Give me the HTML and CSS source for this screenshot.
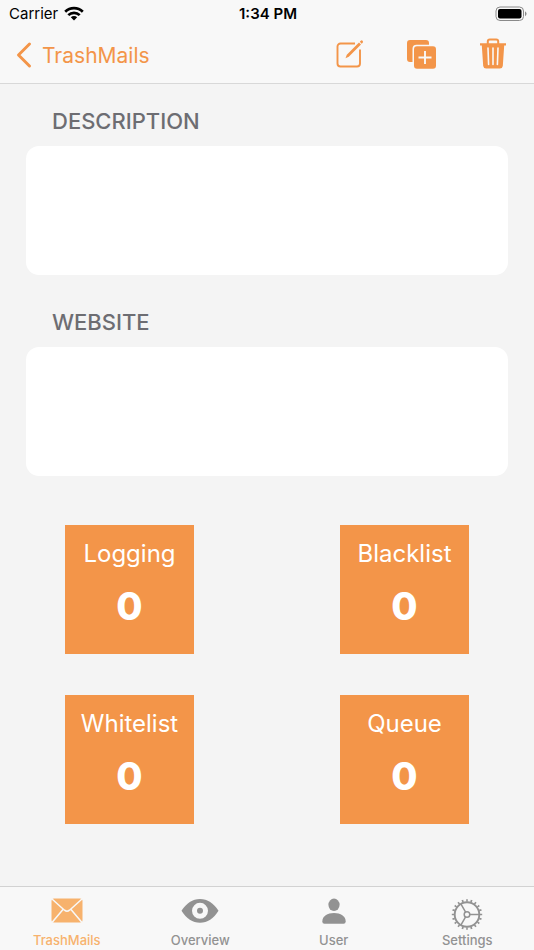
FILE: index.html
```html
<!DOCTYPE html>
<html lang="en">
<head>
  <meta charset="UTF-8" />
  <meta name="viewport" content="width=device-width, initial-scale=1" />
  <title>TrashMails</title>
  <link rel="stylesheet" href="styles.css">
</head>
<body>

  <header class="topbar">
    <div class="status">
      <div class="carrier">
        <span>Carrier</span>
        <svg width="20" height="16" viewBox="0 0 20 16" aria-hidden="true">
          <g fill="none" stroke="#000" stroke-width="2.7">
            <path d="M1.2 5.7 a12.6 12.6 0 0 1 17.6 0" />
            <path d="M4.3 9.1 a8.2 8.2 0 0 1 11.4 0" />
          </g>
          <path d="M10 14.4 L6.8 11.2 a4.6 4.6 0 0 1 6.4 0 z" fill="#000" />
        </svg>
      </div>
      <span class="time">1:34 PM</span>
      <svg class="battery" width="32" height="16" viewBox="0 0 32 16" aria-hidden="true">
        <rect x="1" y="1" width="27.5" height="13.5" rx="4" fill="none" stroke="#8a8a8a" />
        <rect x="3" y="3" width="23.5" height="9.5" rx="2" fill="#000" />
        <path d="M30 5.2 q3.2 2.5 0 5 z" fill="#8a8a8a" />
      </svg>
    </div>
    <nav class="navbar">
      <a class="back" href="#">
        <svg width="16" height="26" viewBox="0 0 16 26" aria-hidden="true">
          <path d="M13.5 2 L2.5 13 L13.5 24" fill="none" stroke="currentColor" stroke-width="3" stroke-linecap="round" stroke-linejoin="round" />
        </svg>
        <span>TrashMails</span>
      </a>
      <div class="actions">
        <button type="button" aria-label="Edit">
          <svg width="32" height="32" viewBox="0 0 32 32">
            <path d="M22 4.5 H7.5 a3 3 0 0 0 -3 3 V24.5 a3 3 0 0 0 3 3 H24 a3 3 0 0 0 3 -3 V10.5" fill="none" stroke="currentColor" stroke-width="1.9" />
            <path d="M12.5 19.2 L13.8 15.7 L26 3.6 L28 5.6 L15.8 17.8 z M26.8 2.7 l1 -1 q0.9 -0.7 1.8 0.1 q0.8 1 0.1 1.9 l-1 1 z" fill="currentColor" />
          </svg>
        </button>
        <button type="button" aria-label="Duplicate">
          <svg width="32" height="32" viewBox="0 0 32 32">
            <path d="M5 1 H21 a3 3 0 0 1 3 3 V5.8 H11.5 a4 4 0 0 0 -4 4 V23 H5 a3 3 0 0 1 -3 -3 V4 a3 3 0 0 1 3 -3 z" fill="currentColor" />
            <rect x="9" y="7.3" width="22" height="22.5" rx="3" fill="currentColor" />
            <path d="M20 12 V25 M13.5 18.5 H26.5" stroke="#f8f8f8" stroke-width="1.9" />
          </svg>
        </button>
        <button type="button" aria-label="Delete">
          <svg width="32" height="32" viewBox="0 0 32 32">
            <path d="M10.8 5 V2.5 a2 2 0 0 1 2 -2 H19.2 a2 2 0 0 1 2 2 V5" fill="none" stroke="currentColor" stroke-width="2" />
            <path d="M3 4.3 H29 V6.5 H27.2 L25.8 27 a3 3 0 0 1 -3 2.5 H9.2 a3 3 0 0 1 -3 -2.5 L4.8 6.5 H3 z" fill="currentColor" />
            <path d="M11 9 L11.6 25.5 M16 9 V25.5 M21 9 L20.4 25.5" stroke="#f8f8f8" stroke-width="1.6" stroke-linecap="round" />
          </svg>
        </button>
      </div>
    </nav>
  </header>

  <main>
    <div class="field">
      <label for="description">DESCRIPTION</label>
      <textarea id="description"></textarea>
    </div>
    <div class="field">
      <label for="website">WEBSITE</label>
      <textarea id="website"></textarea>
    </div>

    <div class="tiles">
      <button type="button" class="tile"><span>Logging</span><strong>0</strong></button>
      <button type="button" class="tile"><span>Blacklist</span><strong>0</strong></button>
      <button type="button" class="tile"><span>Whitelist</span><strong>0</strong></button>
      <button type="button" class="tile"><span>Queue</span><strong>0</strong></button>
    </div>
  </main>

  <nav class="tabbar">
    <a class="tab active" href="#">
      <svg width="40" height="32" viewBox="0 0 40 32" aria-hidden="true">
        <rect x="4.5" y="2.5" width="31" height="24" rx="2.5" fill="currentColor" />
        <path d="M5 3 L17.5 14.2 q2.5 2 5 0 L35 3 M5 26.5 L16.2 13.2 M35 26.5 L23.8 13.2" fill="none" stroke="#f8f8f8" stroke-width="1.5" />
      </svg>
      <span>TrashMails</span>
    </a>
    <a class="tab" href="#">
      <svg width="40" height="32" viewBox="0 0 40 32" aria-hidden="true">
        <path d="M1.5 14.8 C6.5 7 12.5 3 20 3 S33.5 7 38.5 14.8 C33.5 22.8 27.5 26.8 20 26.8 S6.5 22.8 1.5 14.8 z" fill="currentColor" />
        <circle cx="20" cy="14.8" r="5.5" fill="none" stroke="#f8f8f8" stroke-width="5" />
      </svg>
      <span>Overview</span>
    </a>
    <a class="tab" href="#">
      <svg width="40" height="32" viewBox="0 0 40 32" aria-hidden="true">
        <ellipse cx="20" cy="8.8" rx="5.6" ry="6.2" fill="currentColor" />
        <path d="M8.3 25.5 C8.3 20 13.5 17 20 17 S31.7 20 31.7 25.5 Q31.7 27.7 29.5 27.7 H10.5 Q8.3 27.7 8.3 25.5 z" fill="currentColor" />
      </svg>
      <span>User</span>
    </a>
    <a class="tab" href="#">
      <svg width="40" height="34" viewBox="0 0 40 34" aria-hidden="true">
        <g transform="translate(20 18.5)" fill="none" stroke="currentColor">
          <circle r="14" stroke-width="2.4" pathLength="80" stroke-dasharray="1.5 2.5" stroke-dashoffset="0.75" />
          <circle r="12.3" stroke-width="1.9" />
          <circle r="2.8" stroke-width="1.5" />
          <path d="M2.8 0 H12 M-1.4 -2.4 L-6 -10.4 M-1.4 2.4 L-6 10.4" stroke-width="1.5" />
        </g>
      </svg>
      <span>Settings</span>
    </a>
  </nav>

</body>
</html>
```

FILE: styles.css
```css
* {
  box-sizing: border-box;
}

body {
  margin: 0;
  min-height: 100vh;
  display: flex;
  flex-direction: column;
  font-family: Inter, "Liberation Sans", sans-serif;
  background-color: #f4f4f4;
}

button {
  padding: 0;
  border: none;
  background: none;
  font-family: inherit;
  cursor: pointer;
}

a {
  text-decoration: none;
}

svg {
  display: block;
  overflow: visible;
}

.topbar {
  background-color: #f8f8f8;
  border-bottom: 1px solid #d8d8d8;
}

.status {
  display: grid;
  grid-template-columns: 1fr auto 1fr;
  align-items: center;
  height: 27px;
  padding: 0 7px 0 9px;
  font-size: 15px;
}

.carrier {
  display: flex;
  align-items: center;
  gap: 6px;
}

.time {
  font-weight: 600;
}

.battery {
  justify-self: end;
}

.navbar {
  display: flex;
  justify-content: space-between;
  align-items: center;
  height: 56px;
  padding: 0 21px 0 16px;
}

.back {
  display: flex;
  align-items: center;
  gap: 10px;
  font-size: 21px;
  color: #f39549;
}

.actions {
  display: flex;
  gap: 32px;
}

.actions button {
  display: flex;
  justify-content: center;
  width: 40px;
  color: #f39549;
}

main {
  flex: 1;
  padding: 22px 26px;
}

.field {
  margin-bottom: 32px;
}

.field label {
  display: block;
  height: 40px;
  padding-left: 26px;
  line-height: 30px;
  font-size: 22px;
  font-weight: 500;
  color: #6d6d72;
}

.field textarea {
  display: block;
  width: 100%;
  height: 129px;
  padding: 12px;
  border: none;
  border-radius: 13px;
  background-color: white;
  font-family: inherit;
  font-size: 22px;
  resize: none;
}

.tiles {
  display: grid;
  grid-template-columns: 129px 129px;
  justify-content: space-between;
  row-gap: 41px;
  padding: 17px 39px 0;
}

.tile {
  display: flex;
  flex-direction: column;
  align-items: center;
  height: 129px;
  padding-top: 13px;
  background-color: #f39549;
  color: white;
}

.tile span {
  font-size: 24px;
  line-height: 32px;
}

.tile strong {
  margin-top: 12px;
  font-size: 38px;
  font-weight: 800;
  line-height: 48px;
}

.tabbar {
  display: grid;
  grid-template-columns: repeat(4, 1fr);
  height: 64px;
  padding-top: 9px;
  background-color: #f8f8f8;
  border-top: 1px solid #d2d2d2;
}

.tab {
  display: flex;
  flex-direction: column;
  justify-content: space-between;
  align-items: center;
  height: 52px;
  font-size: 13px;
  font-weight: 500;
  line-height: 16px;
  color: #929292;
}

.tab.active {
  color: #f7b26d;
}
```
